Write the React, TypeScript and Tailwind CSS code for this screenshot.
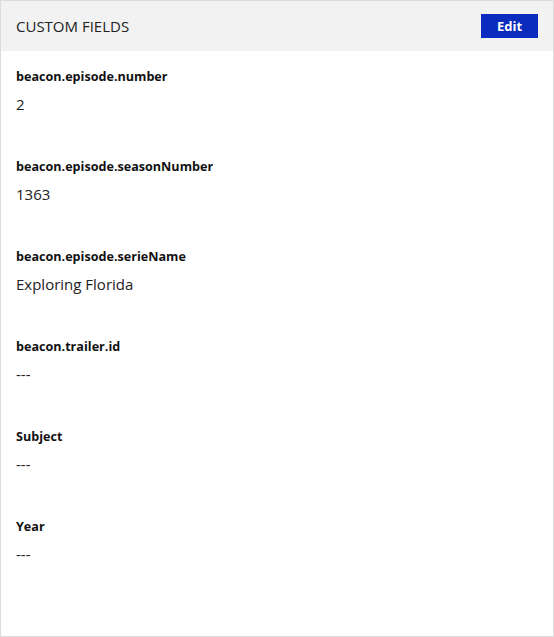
const fields: { label: string; value: string }[] = [
  { label: "beacon.episode.number", value: "2" },
  { label: "beacon.episode.seasonNumber", value: "1363" },
  { label: "beacon.episode.serieName", value: "Exploring Florida" },
  { label: "beacon.trailer.id", value: "---" },
  { label: "Subject", value: "---" },
  { label: "Year", value: "---" },
];

export default function App() {
  return (
    <div
      className="w-[554px] h-[637px] bg-white border border-[#dcdcdc] flex flex-col"
      style={{ fontFamily: '"Open Sans", sans-serif' }}
    >
      <header className="h-[50px] shrink-0 bg-[#f2f2f2] flex items-center justify-between pl-[15px] pr-[15px]">
        <h2 className="text-[15px] text-[#222]">CUSTOM FIELDS</h2>
        <button className="w-[57px] h-[24px] bg-[#0a2bbd] text-white text-[13px] font-bold leading-none">
          Edit
        </button>
      </header>
      <div className="flex flex-col px-[15px]">
        {fields.map((f) => (
          <div key={f.label} className="h-[90px] pt-[17px]">
            <div className="text-[12.6px] leading-[18px] font-bold text-[#111]">{f.label}</div>
            <div className="mt-[8px] text-[15px] leading-[20px] text-[#222]">{f.value}</div>
          </div>
        ))}
      </div>
    </div>
  );
}
